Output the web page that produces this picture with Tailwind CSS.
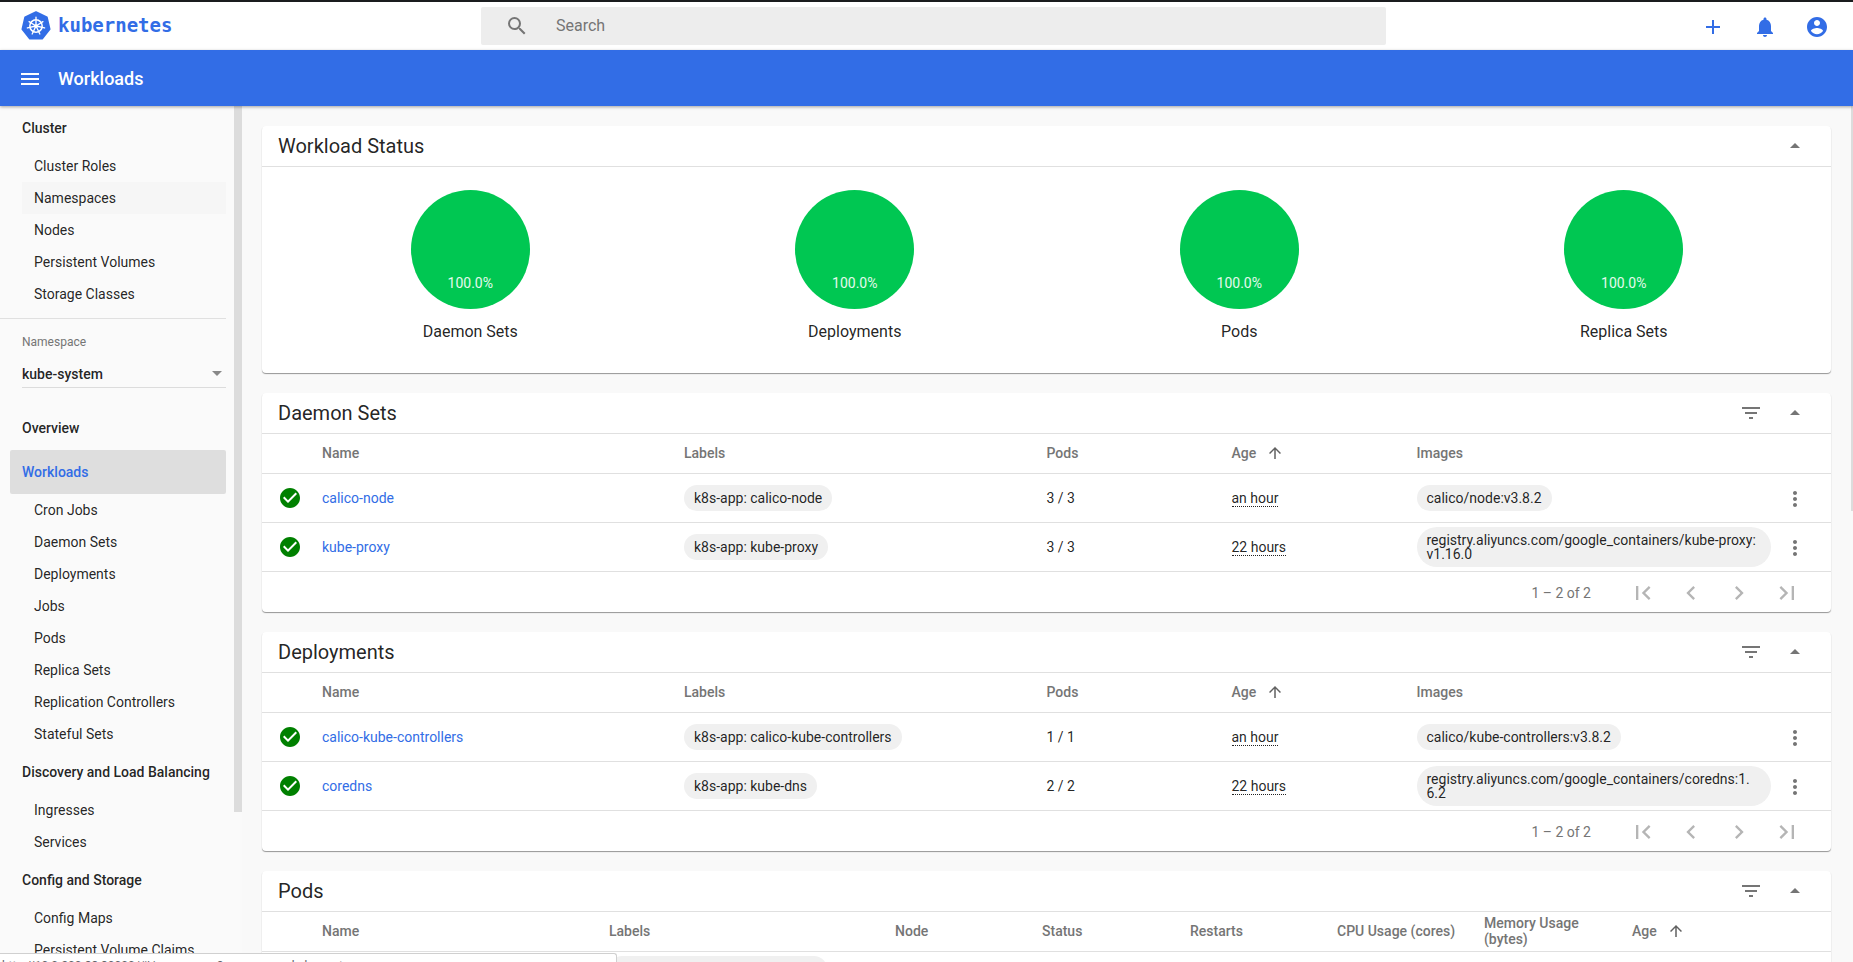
<!DOCTYPE html>
<html lang="en">
<head>
    <meta charset="UTF-8">
    <meta name="viewport" content="width=device-width, initial-scale=1.0">
    <title>Workloads - Kubernetes Dashboard</title>
    <script src="https://cdn.jsdelivr.net/npm/@tailwindcss/browser@4"></script>
</head>
<body class="relative h-screen overflow-hidden flex flex-col bg-[#f9f9f9] text-sm text-black/87 font-['Roboto',sans-serif]">
    <svg class="hidden">
        <symbol id="i-up" viewBox="0 0 24 24"><path d="M7 14l5-5 5 5z"/></symbol>
        <symbol id="i-filter" viewBox="0 0 24 24"><path d="M10 18h4v-2h-4v2zM3 6v2h18V6H3zm3 7h12v-2H6v2z"/></symbol>
        <symbol id="i-more" viewBox="0 0 24 24"><path d="M12 8c1.1 0 2-.9 2-2s-.9-2-2-2-2 .9-2 2 .9 2 2 2zm0 2c-1.1 0-2 .9-2 2s.9 2 2 2 2-.9 2-2-.9-2-2-2zm0 6c-1.1 0-2 .9-2 2s.9 2 2 2 2-.9 2-2-.9-2-2-2z"/></symbol>
        <symbol id="i-check" viewBox="0 0 24 24"><path d="M12 2C6.48 2 2 6.48 2 12s4.48 10 10 10 10-4.48 10-10S17.52 2 12 2zm-2 15l-5-5 1.41-1.41L10 14.17l7.59-7.59L19 8l-9 9z"/></symbol>
        <symbol id="i-first" viewBox="0 0 24 24"><path d="M18.41 16.59L13.82 12l4.59-4.59L17 6l-6 6 6 6zM6 6h2v12H6z"/></symbol>
        <symbol id="i-prev" viewBox="0 0 24 24"><path d="M15.41 7.41L14 6l-6 6 6 6 1.41-1.41L10.83 12z"/></symbol>
        <symbol id="i-next" viewBox="0 0 24 24"><path d="M10 6L8.59 7.41 13.17 12l-4.58 4.59L10 18l6-6z"/></symbol>
        <symbol id="i-last" viewBox="0 0 24 24"><path d="M5.59 7.41L10.18 12l-4.59 4.59L7 18l6-6-6-6zM16 6h2v12h-2z"/></symbol>
        <symbol id="i-sort" viewBox="0 0 24 24"><path d="M4 12l1.41 1.41L11 7.83V20h2V7.83l5.58 5.59L20 12l-8-8-8 8z"/></symbol>
    </svg>

    <div class="h-[2px] shrink-0 bg-[#1a1c1e]"></div>

    <!-- toolbar -->
    <header class="h-[48px] shrink-0 bg-white flex items-center">
        <div class="w-[481px] shrink-0 flex items-center pl-[21px] gap-[7px]">
            <svg class="w-[30px] h-[32px]" viewBox="0 0 32 32">
                <path d="M16 1.2 27.6 6.8 30.5 19.3 22.5 29.4H9.5L1.5 19.3 4.4 6.8z" fill="#326de6" stroke="#326de6" stroke-width="2" stroke-linejoin="round"/>
                <g fill="none" stroke="#fff" stroke-linecap="round">
                    <circle cx="16" cy="16" r="6.6" stroke-width="1.6"/>
                    <path stroke-width="1.4" d="M16 16V6.5M16 16l7.4-4.7M16 16l-7.4-4.7M16 16l9.2 2.1M16 16l-9.2 2.1M16 16l4.1 8.5M16 16l-4.1 8.5"/>
                </g>
                <circle cx="16" cy="16" r="1.8" fill="#fff"/>
            </svg>
            <span class="text-[19px] font-bold text-[#326de6] font-['DejaVu_Sans_Mono',monospace]">kubernetes</span>
        </div>
        <div class="w-[905px] h-[38px] shrink-0 bg-[#ededed] rounded-[2px] flex items-center pl-[24px] gap-[27px]">
            <svg class="w-6 h-6 fill-[#757575]" viewBox="0 0 24 24"><path d="M15.5 14h-.79l-.28-.27A6.471 6.471 0 0 0 16 9.5 6.5 6.5 0 1 0 9.5 16c1.61 0 3.09-.59 4.23-1.57l.27.28v.79l5 4.99L20.49 19l-4.99-5zm-6 0C7.01 14 5 11.99 5 9.5S7.01 5 9.5 5 14 7.01 14 9.5 11.99 14 9.5 14z"/></svg>
            <span class="text-base text-[#757575]">Search</span>
        </div>
        <div class="flex-1 flex justify-end items-center gap-[28px] pr-[24px] pt-[2px] fill-[#326de6]">
            <svg class="w-6 h-6" viewBox="0 0 24 24"><path d="M19 13h-6v6h-2v-6H5v-2h6V5h2v6h6v2z"/></svg>
            <svg class="w-6 h-6" viewBox="0 0 24 24"><path d="M12 22c1.1 0 2-.9 2-2h-4c0 1.1.89 2 2 2zm6-6v-5c0-3.07-1.64-5.64-4.5-6.32V4c0-.83-.67-1.5-1.5-1.5s-1.5.67-1.5 1.5v.68C7.63 5.36 6 7.92 6 11v5l-2 2v1h16v-1l-2-2z"/></svg>
            <svg class="w-6 h-6" viewBox="0 0 24 24"><path d="M12 2C6.48 2 2 6.48 2 12s4.48 10 10 10 10-4.48 10-10S17.52 2 12 2zm0 3c1.66 0 3 1.34 3 3s-1.34 3-3 3-3-1.34-3-3 1.34-3 3-3zm0 14.2c-2.5 0-4.71-1.28-6-3.22.03-1.99 4-3.08 6-3.08 1.99 0 5.97 1.09 6 3.08-1.29 1.94-3.5 3.22-6 3.22z"/></svg>
        </div>
    </header>

    <!-- action bar -->
    <div class="relative z-10 h-[56px] shrink-0 bg-[#326de6] flex items-center pl-[18px] gap-[16px] shadow-[0_1px_3px_rgba(0,0,0,0.35)]">
        <svg class="w-6 h-6 fill-white mt-[1px]" viewBox="0 0 24 24"><path d="M3 18h18v-2H3v2zm0-5h18v-2H3v2zm0-7v2h18V6H3z"/></svg>
        <span class="text-lg font-medium text-white mt-[2px]">Workloads</span>
    </div>

    <div class="flex-1 flex min-h-0">
        <!-- side nav -->
        <aside class="relative w-[242px] shrink-0 bg-[#fafafa] overflow-hidden">
            <div class="w-[226px]">
                <div class="h-[44px] pl-[22px] flex items-center font-medium">Cluster</div>
                <div class="h-[32px] pl-[34px] flex items-center">Cluster Roles</div>
                <div class="h-[32px] ml-[22px] pl-[12px] flex items-center bg-[#f6f6f6]">Namespaces</div>
                <div class="h-[32px] pl-[34px] flex items-center">Nodes</div>
                <div class="h-[32px] pl-[34px] flex items-center">Persistent Volumes</div>
                <div class="h-[32px] pl-[34px] flex items-center">Storage Classes</div>
                <div class="mt-2 border-t border-[#e0e0e0]"></div>

                <div class="pl-[22px] h-[87px]">
                    <div class="pt-[15px] text-xs leading-4 text-[#757575]">Namespace</div>
                    <div class="h-[38px] pb-[3px] flex items-end justify-between border-b border-[#dcdcdc]">
                        <span class="leading-5 font-medium">kube-system</span>
                        <svg class="w-6 h-6 -mr-[3px] -mb-[1px] fill-[#888]" viewBox="0 0 24 24"><path d="M7 10l5 5 5-5z"/></svg>
                    </div>
                </div>

                <div class="h-[44px] pl-[22px] flex items-center font-medium">Overview</div>
                <div class="h-[44px] ml-[10px] pl-[12px] flex items-center bg-[#dedede] rounded-[2px] font-medium text-[#326de6]">Workloads</div>
                <div class="h-[32px] pl-[34px] flex items-center">Cron Jobs</div>
                <div class="h-[32px] pl-[34px] flex items-center">Daemon Sets</div>
                <div class="h-[32px] pl-[34px] flex items-center">Deployments</div>
                <div class="h-[32px] pl-[34px] flex items-center">Jobs</div>
                <div class="h-[32px] pl-[34px] flex items-center">Pods</div>
                <div class="h-[32px] pl-[34px] flex items-center">Replica Sets</div>
                <div class="h-[32px] pl-[34px] flex items-center">Replication Controllers</div>
                <div class="h-[32px] pl-[34px] flex items-center">Stateful Sets</div>
                <div class="h-[44px] pl-[22px] flex items-center font-medium">Discovery and Load Balancing</div>
                <div class="h-[32px] pl-[34px] flex items-center">Ingresses</div>
                <div class="h-[32px] pl-[34px] flex items-center">Services</div>
                <div class="h-[44px] pl-[22px] flex items-center font-medium">Config and Storage</div>
                <div class="h-[32px] pl-[34px] flex items-center">Config Maps</div>
                <div class="h-[32px] pl-[34px] flex items-center">Persistent Volume Claims</div>
            </div>
            <div class="absolute top-0 left-[234px] w-[8px] h-[706px] bg-[#dcdcdc]"></div>
        </aside>

        <!-- content -->
        <main class="relative flex-1 min-w-0 overflow-hidden pt-[20px] pl-[20px] pr-[22px] flex flex-col gap-[20px]">
            <div class="absolute top-0 right-0 w-[2px] h-[405px] bg-[#dcdcdc]"></div>
            <section class="shrink-0 bg-white rounded-[4px] shadow-[0_1px_1px_rgba(0,0,0,0.4)] h-[247px]">
                <div class="h-[41px] pl-[16px] pr-[24px] flex items-center justify-between border-b border-[#e0e0e0]">
                    <h2 class="text-xl text-black/87">Workload Status</h2>
                    <svg class="w-6 h-6 fill-[#757575]"><use href="#i-up"/></svg>
                </div>
                <div class="grid grid-cols-4 pl-[16px] pr-[15px] pt-[23px]">
                    <div class="flex flex-col items-center">
                        <div class="w-[119px] h-[119px] rounded-full bg-[#00c752] flex items-end justify-center pb-[16px] text-white/90">100.0%</div>
                        <div class="mt-[13px] text-base leading-5">Daemon Sets</div>
                    </div>
                    <div class="flex flex-col items-center">
                        <div class="w-[119px] h-[119px] rounded-full bg-[#00c752] flex items-end justify-center pb-[16px] text-white/90">100.0%</div>
                        <div class="mt-[13px] text-base leading-5">Deployments</div>
                    </div>
                    <div class="flex flex-col items-center">
                        <div class="w-[119px] h-[119px] rounded-full bg-[#00c752] flex items-end justify-center pb-[16px] text-white/90">100.0%</div>
                        <div class="mt-[13px] text-base leading-5">Pods</div>
                    </div>
                    <div class="flex flex-col items-center">
                        <div class="w-[119px] h-[119px] rounded-full bg-[#00c752] flex items-end justify-center pb-[16px] text-white/90">100.0%</div>
                        <div class="mt-[13px] text-base leading-5">Replica Sets</div>
                    </div>
                </div>
            </section>

            <section class="shrink-0 bg-white rounded-[4px] shadow-[0_1px_1px_rgba(0,0,0,0.4)]">
                <div class="h-[41px] pl-[16px] pr-[24px] flex items-center justify-between border-b border-[#e0e0e0]">
                    <h2 class="text-xl text-black/87">Daemon Sets</h2>
                    <div class="flex items-center gap-[20px] fill-[#757575]">
                        <svg class="w-6 h-6"><use href="#i-filter"/></svg>
                        <svg class="w-6 h-6"><use href="#i-up"/></svg>
                    </div>
                </div>
                <div class="h-[40px] pb-[2px] grid grid-cols-[60px_362px_362.5px_185px_185px_1fr] items-center border-b border-[#e0e0e0] font-medium text-[#757575]">
                    <span></span><span class="col-start-2">Name</span><span>Labels</span><span>Pods</span>
                    <span class="flex items-center gap-[10px]">Age <svg class="w-[18px] h-[18px] fill-[#616161]"><use href="#i-sort"/></svg></span>
                    <span>Images</span>
                </div>
                <div class="h-[49px] grid grid-cols-[60px_362px_362.5px_185px_185px_1fr_60px] items-center border-b border-[#e0e0e0]">
                    <svg class="w-6 h-6 ml-[16px] fill-[#008000]"><use href="#i-check"/></svg>
                    <a class="text-[#326de6]">calico-node</a>
                    <span><span class="inline-block px-[10px] leading-[26px] rounded-full bg-[#f0f0f0]">k8s-app: calico-node</span></span>
                    <span>3 / 3</span>
                    <span><abbr class="no-underline border-b border-dotted border-black/87">an hour</abbr></span>
                    <span><span class="inline-block px-[10px] leading-[26px] rounded-full bg-[#f0f0f0]">calico/node:v3.8.2</span></span>
                    <svg class="w-6 h-6 ml-[12px] mt-[2px] fill-[#757575]"><use href="#i-more"/></svg>
                </div>
                <div class="h-[49px] grid grid-cols-[60px_362px_362.5px_185px_185px_1fr_60px] items-center border-b border-[#e0e0e0]">
                    <svg class="w-6 h-6 ml-[16px] fill-[#008000]"><use href="#i-check"/></svg>
                    <a class="text-[#326de6]">kube-proxy</a>
                    <span><span class="inline-block px-[10px] leading-[26px] rounded-full bg-[#f0f0f0]">k8s-app: kube-proxy</span></span>
                    <span>3 / 3</span>
                    <span><abbr class="no-underline border-b border-dotted border-black/87">22 hours</abbr></span>
                    <span class="block w-[354px] px-[10px] py-[6px] leading-[14px] rounded-[20px] bg-[#f0f0f0] break-all">registry.aliyuncs.com/google_containers/kube-proxy:v1.16.0</span>
                    <svg class="w-6 h-6 ml-[12px] mt-[2px] fill-[#757575]"><use href="#i-more"/></svg>
                </div>
                <div class="h-[40px] flex items-center justify-end pr-[30px] fill-[#b5b5b5]">
                    <span class="mr-[38px] mt-[1px] text-[#757575]">1 – 2 of 2</span>
                    <div class="flex gap-[20px] mt-[1px]">
                        <svg class="w-7 h-7"><use href="#i-first"/></svg>
                        <svg class="w-7 h-7"><use href="#i-prev"/></svg>
                        <svg class="w-7 h-7"><use href="#i-next"/></svg>
                        <svg class="w-7 h-7"><use href="#i-last"/></svg>
                    </div>
                </div>
            </section>

            <section class="shrink-0 bg-white rounded-[4px] shadow-[0_1px_1px_rgba(0,0,0,0.4)]">
                <div class="h-[41px] pl-[16px] pr-[24px] flex items-center justify-between border-b border-[#e0e0e0]">
                    <h2 class="text-xl text-black/87">Deployments</h2>
                    <div class="flex items-center gap-[20px] fill-[#757575]">
                        <svg class="w-6 h-6"><use href="#i-filter"/></svg>
                        <svg class="w-6 h-6"><use href="#i-up"/></svg>
                    </div>
                </div>
                <div class="h-[40px] pb-[2px] grid grid-cols-[60px_362px_362.5px_185px_185px_1fr] items-center border-b border-[#e0e0e0] font-medium text-[#757575]">
                    <span></span><span class="col-start-2">Name</span><span>Labels</span><span>Pods</span>
                    <span class="flex items-center gap-[10px]">Age <svg class="w-[18px] h-[18px] fill-[#616161]"><use href="#i-sort"/></svg></span>
                    <span>Images</span>
                </div>
                <div class="h-[49px] grid grid-cols-[60px_362px_362.5px_185px_185px_1fr_60px] items-center border-b border-[#e0e0e0]">
                    <svg class="w-6 h-6 ml-[16px] fill-[#008000]"><use href="#i-check"/></svg>
                    <a class="text-[#326de6]">calico-kube-controllers</a>
                    <span><span class="inline-block px-[10px] leading-[26px] rounded-full bg-[#f0f0f0]">k8s-app: calico-kube-controllers</span></span>
                    <span>1 / 1</span>
                    <span><abbr class="no-underline border-b border-dotted border-black/87">an hour</abbr></span>
                    <span><span class="inline-block px-[10px] leading-[26px] rounded-full bg-[#f0f0f0]">calico/kube-controllers:v3.8.2</span></span>
                    <svg class="w-6 h-6 ml-[12px] mt-[2px] fill-[#757575]"><use href="#i-more"/></svg>
                </div>
                <div class="h-[49px] grid grid-cols-[60px_362px_362.5px_185px_185px_1fr_60px] items-center border-b border-[#e0e0e0]">
                    <svg class="w-6 h-6 ml-[16px] fill-[#008000]"><use href="#i-check"/></svg>
                    <a class="text-[#326de6]">coredns</a>
                    <span><span class="inline-block px-[10px] leading-[26px] rounded-full bg-[#f0f0f0]">k8s-app: kube-dns</span></span>
                    <span>2 / 2</span>
                    <span><abbr class="no-underline border-b border-dotted border-black/87">22 hours</abbr></span>
                    <span class="block w-[354px] px-[10px] py-[6px] leading-[14px] rounded-[20px] bg-[#f0f0f0] break-all">registry.aliyuncs.com/google_containers/coredns:1.6.2</span>
                    <svg class="w-6 h-6 ml-[12px] mt-[2px] fill-[#757575]"><use href="#i-more"/></svg>
                </div>
                <div class="h-[40px] flex items-center justify-end pr-[30px] fill-[#b5b5b5]">
                    <span class="mr-[38px] mt-[1px] text-[#757575]">1 – 2 of 2</span>
                    <div class="flex gap-[20px] mt-[1px]">
                        <svg class="w-7 h-7"><use href="#i-first"/></svg>
                        <svg class="w-7 h-7"><use href="#i-prev"/></svg>
                        <svg class="w-7 h-7"><use href="#i-next"/></svg>
                        <svg class="w-7 h-7"><use href="#i-last"/></svg>
                    </div>
                </div>
            </section>

            <section class="shrink-0 bg-white rounded-[4px] shadow-[0_1px_1px_rgba(0,0,0,0.4)]">
                <div class="h-[41px] pl-[16px] pr-[24px] flex items-center justify-between border-b border-[#e0e0e0]">
                    <h2 class="text-xl text-black/87">Pods</h2>
                    <div class="flex items-center gap-[20px] fill-[#757575]">
                        <svg class="w-6 h-6"><use href="#i-filter"/></svg>
                        <svg class="w-6 h-6"><use href="#i-up"/></svg>
                    </div>
                </div>
                <div class="h-[40px] pb-[2px] grid grid-cols-[60px_287px_286px_147px_148px_147px_147px_148px_1fr] items-center border-b border-[#e0e0e0] font-medium text-[#757575]">
                    <span></span><span>Name</span><span>Labels</span><span>Node</span><span>Status</span><span>Restarts</span><span>CPU Usage (cores)</span>
                    <span class="leading-[16px] w-[110px]">Memory Usage (bytes)</span>
                    <span class="flex items-center gap-[10px]">Age <svg class="w-[18px] h-[18px] fill-[#616161]"><use href="#i-sort"/></svg></span>
                </div>
                <div class="h-[49px] pl-[347px] pt-[4px]">
                    <span class="inline-block px-[10px] leading-[26px] rounded-full bg-[#f0f0f0]">k8s-app: calico-kube-controllers</span>
                </div>
            </section>
        </main>
    </div>

    <!-- link preview from the browser -->
    <div class="absolute left-0 bottom-0 w-[617px] h-[9px] overflow-hidden bg-white border-t border-r border-[#d0d0d0] rounded-tr-[3px] pl-[2px] pt-[4px] text-xs leading-4 text-[#5f6368]">http://10.0.200.83:30000/#!/namespace?namespace=kube-system</div>
</body>
</html>
